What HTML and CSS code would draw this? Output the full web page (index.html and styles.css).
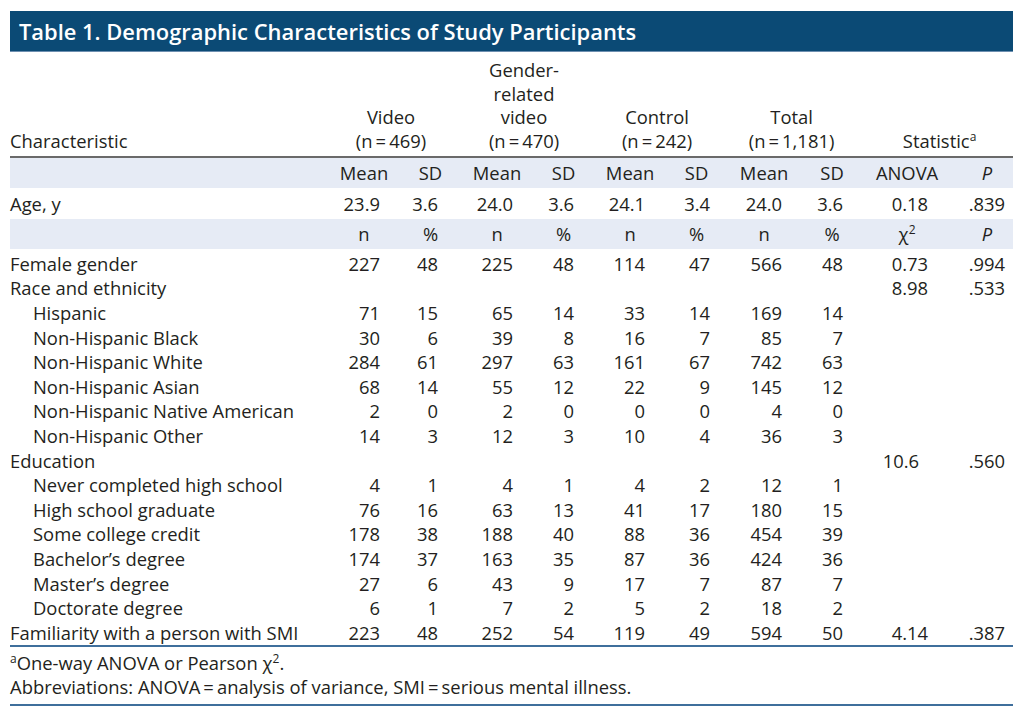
FILE: index.html
```html
<!DOCTYPE html>
<html lang="en">
<head>
<meta charset="utf-8">
<title>Table 1. Demographic Characteristics of Study Participants</title>
<link rel="stylesheet" href="styles.css">
</head>
<body>
<div class="wrap">
  <h1 class="title">Table 1. Demographic Characteristics of Study Participants</h1>
  <table class="tbl">
    <colgroup>
      <col class="w-char">
      <col class="w-a"><col class="w-b"><col class="w-a"><col class="w-b">
      <col class="w-a"><col class="w-b"><col class="w-c"><col class="w-c">
      <col class="w-anova"><col class="w-p">
    </colgroup>
    <thead>
      <tr class="grp">
        <th class="lbl">Characteristic</th>
        <th colspan="2" class="gh">Video<br>(n&#8201;=&#8201;469)</th>
        <th colspan="2" class="gh">Gender-<br>related<br>video<br>(n&#8201;=&#8201;470)</th>
        <th colspan="2" class="gh">Control<br>(n&#8201;=&#8201;242)</th>
        <th colspan="2" class="gh">Total<br>(n&#8201;=&#8201;1,181)</th>
        <th colspan="2" class="sh">Statistic<sup>a</sup></th>
      </tr>
    </thead>
    <tbody>
      <tr class="shade">
        <td></td><td>Mean</td><td>SD</td><td>Mean</td><td>SD</td><td>Mean</td><td>SD</td><td>Mean</td><td>SD</td><td>ANOVA</td><td class="pc"><i>P</i></td>
      </tr>
      <tr class="age">
        <td class="lbl">Age, y</td><td class="n1">23.9</td><td class="n2">3.6</td><td class="n3">24.0</td><td class="n4">3.6</td><td class="n5">24.1</td><td class="n6">3.4</td><td class="n7">24.0</td><td class="n8">3.6</td><td class="n9">0.18</td><td class="n10">.839</td>
      </tr>
      <tr class="shade">
        <td></td><td>n</td><td>%</td><td>n</td><td>%</td><td>n</td><td>%</td><td>n</td><td>%</td><td>χ<sup>2</sup></td><td class="pc"><i>P</i></td>
      </tr>
      <tr class="row first">
        <td class="lbl">Female gender</td><td class="n1">227</td><td class="n2">48</td><td class="n3">225</td><td class="n4">48</td><td class="n5">114</td><td class="n6">47</td><td class="n7">566</td><td class="n8">48</td><td class="n9">0.73</td><td class="n10">.994</td>
      </tr>
      <tr class="row">
        <td class="lbl">Race and ethnicity</td><td></td><td></td><td></td><td></td><td></td><td></td><td></td><td></td><td class="n9">8.98</td><td class="n10">.533</td>
      </tr>
      <tr class="row">
        <td class="lbl sub">Hispanic</td><td class="n1">71</td><td class="n2">15</td><td class="n3">65</td><td class="n4">14</td><td class="n5">33</td><td class="n6">14</td><td class="n7">169</td><td class="n8">14</td><td></td><td></td>
      </tr>
      <tr class="row">
        <td class="lbl sub">Non-Hispanic Black</td><td class="n1">30</td><td class="n2">6</td><td class="n3">39</td><td class="n4">8</td><td class="n5">16</td><td class="n6">7</td><td class="n7">85</td><td class="n8">7</td><td></td><td></td>
      </tr>
      <tr class="row">
        <td class="lbl sub">Non-Hispanic White</td><td class="n1">284</td><td class="n2">61</td><td class="n3">297</td><td class="n4">63</td><td class="n5">161</td><td class="n6">67</td><td class="n7">742</td><td class="n8">63</td><td></td><td></td>
      </tr>
      <tr class="row">
        <td class="lbl sub">Non-Hispanic Asian</td><td class="n1">68</td><td class="n2">14</td><td class="n3">55</td><td class="n4">12</td><td class="n5">22</td><td class="n6">9</td><td class="n7">145</td><td class="n8">12</td><td></td><td></td>
      </tr>
      <tr class="row">
        <td class="lbl sub">Non-Hispanic Native American</td><td class="n1">2</td><td class="n2">0</td><td class="n3">2</td><td class="n4">0</td><td class="n5">0</td><td class="n6">0</td><td class="n7">4</td><td class="n8">0</td><td></td><td></td>
      </tr>
      <tr class="row">
        <td class="lbl sub">Non-Hispanic Other</td><td class="n1">14</td><td class="n2">3</td><td class="n3">12</td><td class="n4">3</td><td class="n5">10</td><td class="n6">4</td><td class="n7">36</td><td class="n8">3</td><td></td><td></td>
      </tr>
      <tr class="row">
        <td class="lbl">Education</td><td></td><td></td><td></td><td></td><td></td><td></td><td></td><td></td><td class="n9 d1">10.6</td><td class="n10">.560</td>
      </tr>
      <tr class="row">
        <td class="lbl sub">Never completed high school</td><td class="n1">4</td><td class="n2">1</td><td class="n3">4</td><td class="n4">1</td><td class="n5">4</td><td class="n6">2</td><td class="n7">12</td><td class="n8">1</td><td></td><td></td>
      </tr>
      <tr class="row">
        <td class="lbl sub">High school graduate</td><td class="n1">76</td><td class="n2">16</td><td class="n3">63</td><td class="n4">13</td><td class="n5">41</td><td class="n6">17</td><td class="n7">180</td><td class="n8">15</td><td></td><td></td>
      </tr>
      <tr class="row">
        <td class="lbl sub">Some college credit</td><td class="n1">178</td><td class="n2">38</td><td class="n3">188</td><td class="n4">40</td><td class="n5">88</td><td class="n6">36</td><td class="n7">454</td><td class="n8">39</td><td></td><td></td>
      </tr>
      <tr class="row">
        <td class="lbl sub">Bachelor’s degree</td><td class="n1">174</td><td class="n2">37</td><td class="n3">163</td><td class="n4">35</td><td class="n5">87</td><td class="n6">36</td><td class="n7">424</td><td class="n8">36</td><td></td><td></td>
      </tr>
      <tr class="row">
        <td class="lbl sub">Master’s degree</td><td class="n1">27</td><td class="n2">6</td><td class="n3">43</td><td class="n4">9</td><td class="n5">17</td><td class="n6">7</td><td class="n7">87</td><td class="n8">7</td><td></td><td></td>
      </tr>
      <tr class="row">
        <td class="lbl sub">Doctorate degree</td><td class="n1">6</td><td class="n2">1</td><td class="n3">7</td><td class="n4">2</td><td class="n5">5</td><td class="n6">2</td><td class="n7">18</td><td class="n8">2</td><td></td><td></td>
      </tr>
      <tr class="row last">
        <td class="lbl">Familiarity with a person with SMI</td><td class="n1">223</td><td class="n2">48</td><td class="n3">252</td><td class="n4">54</td><td class="n5">119</td><td class="n6">49</td><td class="n7">594</td><td class="n8">50</td><td class="n9">4.14</td><td class="n10">.387</td>
      </tr>
    </tbody>
  </table>
  <div class="notes">
    <p><sup>a</sup>One-way ANOVA or Pearson χ<sup>2</sup>.</p>
    <p>Abbreviations: ANOVA&#8201;=&#8201;analysis of variance, SMI&#8201;=&#8201;serious mental illness.</p>
  </div>
</div>
</body>
</html>
```

FILE: styles.css
```css
html, body {
  margin: 0;
  padding: 0;
  background: #ffffff;
}

body {
  font-family: "Open Sans", Lato, "Liberation Sans", sans-serif;
  color: #231f20;
}

.wrap {
  width: 1003px;
  margin: 11px 0 0 10px;
}

.title {
  margin: 0;
  height: 41px;
  background: #0b4a75;
  color: #ffffff;
  font-size: 21.9px;
  font-weight: 600;
  line-height: 41px;
  padding-left: 9px;
  border-bottom: 1px solid #6d8fb0;
  box-sizing: border-box;
}

.tbl {
  width: 1003px;
  table-layout: fixed;
  border-collapse: collapse;
  font-size: 18.4px;
}

.w-char { width: 321px; }
.w-a { width: 66px; }
.w-b { width: 67px; }
.w-c { width: 68px; }
.w-anova { width: 82px; }
.w-p { width: 65px; }

.tbl th,
.tbl td {
  padding: 0;
  font-weight: 400;
  white-space: nowrap;
}

.tbl .grp th {
  line-height: 23.7px;
  vertical-align: bottom;
  text-align: center;
  padding-top: 6px;
  padding-bottom: 3px;
  border-bottom: 2px solid #6a6a6a;
}

.tbl .grp th.lbl {
  text-align: left;
}

.tbl .grp th.gh {
  padding-right: 13px;
}

sup {
  font-size: 12px;
  line-height: 0;
  vertical-align: 7px;
}

.tbl .shade td {
  background: #e6ebf5;
  height: 30px;
  text-align: center;
}

.tbl .shade td.pc {
  padding-left: 13px;
}

.tbl .age td {
  height: 31px;
}

.tbl .row td {
  height: 24.6px;
  line-height: 24.6px;
}

.tbl .row.first td {
  padding-top: 3px;
}

.tbl .row.last td {
  border-bottom: 2px solid #3f6f9c;
}

.tbl .lbl {
  text-align: left;
}

.tbl .lbl.sub {
  padding-left: 23px;
}

.tbl .n1, .tbl .n2, .tbl .n3, .tbl .n4, .tbl .n5,
.tbl .n6, .tbl .n7, .tbl .n8, .tbl .n9, .tbl .n10 {
  text-align: right;
}

.tbl .n1 { padding-right: 17px; }
.tbl .n2 { padding-right: 26px; }
.tbl .n3 { padding-right: 17px; }
.tbl .n4 { padding-right: 23px; }
.tbl .n5 { padding-right: 18px; }
.tbl .n6 { padding-right: 20px; }
.tbl .n7 { padding-right: 16px; }
.tbl .n8 { padding-right: 23px; }
.tbl .n9 { padding-right: 20px; }
.tbl .n10 { padding-right: 8px; }
.tbl .n9.d1 { padding-right: 29px; }

.notes {
  padding: 4px 0 5px;
  border-bottom: 2px solid #3f6f9c;
  font-size: 18.4px;
}

.notes p {
  margin: 0;
  line-height: 24px;
}
```
